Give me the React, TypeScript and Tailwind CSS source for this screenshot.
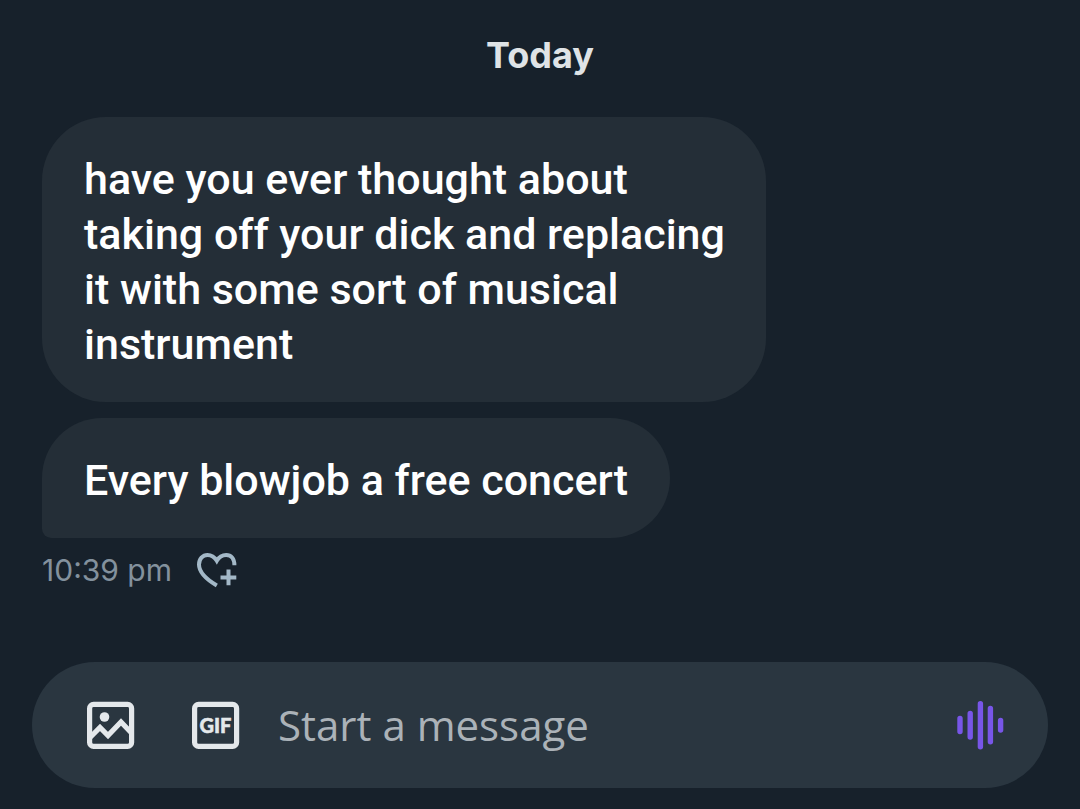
import { useState } from "react";

function HeartPlusIcon() {
  return (
    <svg width="42" height="36" viewBox="0 0 42 36" fill="none" stroke="#a3b8c7" strokeWidth="4" aria-hidden="true">
      <path d="M20.8 33.5C9 26.5 3 19.5 3 12.5C3 7 6.700 3 11.500 3C15.500 3 18.500 5 20.800 8.800C23 5 26.200 3 30.200 3C35 3 38.400 6.500 38.400 13.300" />
      <path d="M32.500 17.500V33.300M24.500 25.400H40.300" />
    </svg>
  );
}

function PhotoIcon() {
  return (
    <svg width="48" height="48" viewBox="0 0 48 48" fill="none" aria-hidden="true">
      <rect x="2.600" y="3.400" width="42" height="42" rx="4" stroke="#e4e8eb" strokeWidth="5.200" />
      <circle cx="17.500" cy="16" r="4.800" fill="#e4e8eb" />
      <path d="M3 36.500L13 26.500L21 34.500L34 21L45 32.500" stroke="#e4e8eb" strokeWidth="5.200" />
    </svg>
  );
}

function GifIcon() {
  return (
    <svg width="48" height="48" viewBox="0 0 48 48" fill="none" stroke="#e4e8eb" aria-hidden="true">
      <rect x="2.600" y="3.400" width="42" height="42" rx="4" strokeWidth="5.200" />
      <text x="23.500" y="31.500" textAnchor="middle" fontSize="20" fill="#e4e8eb" strokeWidth="0.500" className="font-['Lato',sans-serif] font-black">
        GIF
      </text>
    </svg>
  );
}

function VoiceIcon() {
  return (
    <svg width="48" height="50" viewBox="0 0 48 50" fill="none" stroke="#7856e8" strokeWidth="5.400" strokeLinecap="round" aria-hidden="true">
      <path d="M4 18.500V31.500M14.200 13.500V37M24.400 3.700V46.800M34.400 8.500V41.800M44.600 20.500V30" />
    </svg>
  );
}

export default function App() {
  const [draft, setDraft] = useState("");

  return (
    <main className="flex min-h-screen flex-col bg-[#17212b] px-8 pb-[21px] font-['Inter',sans-serif]">
      <h1 className="pt-8 text-center text-4xl leading-[46px] font-bold text-[#dfe3e6]">Today</h1>

      <section aria-label="Messages" className="mt-[39px] flex flex-col items-start gap-4 px-[10px] font-['Roboto',sans-serif] text-[43px] leading-[55px] font-medium text-white">
        <p className="max-w-[724px] rounded-[64px] bg-[#242e37] pt-[35px] pr-[32px] pb-[30px] pl-[42px]">
          have you ever thought about taking off your dick and replacing it with some sort of musical instrument
        </p>
        <p className="rounded-[64px] rounded-bl-[10px] bg-[#242e37] px-[42px] pt-[35px] pb-[30px]">
          Every blowjob a free concert
        </p>
      </section>

      <div className="mt-3 flex items-center gap-[24px] px-[10px]">
        <time className="text-[30px] leading-[40px] text-[#83919d]">10:39 pm</time>
        <button type="button" aria-label="Add reaction">
          <HeartPlusIcon />
        </button>
      </div>

      <form className="mt-auto flex h-[126px] items-center rounded-full bg-[#2a3640] pr-[44px] pl-[55px]" onSubmit={(e) => e.preventDefault()}>
        <button type="button" aria-label="Add photo">
          <PhotoIcon />
        </button>
        <button type="button" aria-label="Add GIF" className="ml-[57px]">
          <GifIcon />
        </button>
        <input
          type="text"
          aria-label="Message"
          placeholder="Start a message"
          value={draft}
          onChange={(e) => setDraft(e.target.value)}
          className="mr-10 ml-[38px] min-w-0 flex-1 bg-transparent font-['Open_Sans',sans-serif] text-[42px] leading-[56px] text-white outline-none placeholder:text-[#abb2b8]"
        />
        <button type="button" aria-label="Record voice message">
          <VoiceIcon />
        </button>
      </form>
    </main>
  );
}
